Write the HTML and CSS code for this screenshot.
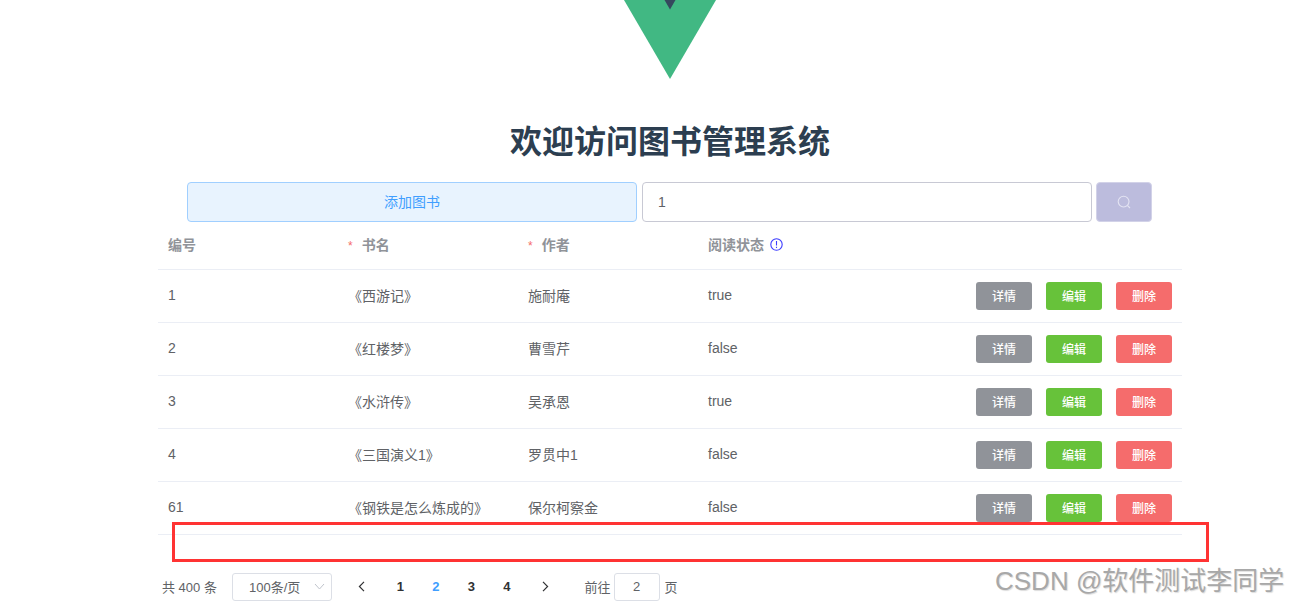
FILE: index.html
```html
<!DOCTYPE html>
<html lang="zh-CN">
<head>
<meta charset="utf-8">
<title>图书管理系统</title>
<link rel="stylesheet" href="styles.css">
</head>
<body>
<div class="app">
  <svg class="logo" width="92" height="79" viewBox="0 0 92 79"><polygon fill="#41b883" points="0,0 92,0 46,79"/><polygon fill="#35495e" points="40.5,0 51.5,0 46,9.5"/></svg>
  <h1 class="title">欢迎访问图书管理系统</h1>
  <div class="toolbar">
    <button class="add">添加图书</button>
    <input class="search-input" value="1">
    <button class="search-btn" aria-label="搜索"><svg width="14" height="14" viewBox="0 0 14 14" fill="none" stroke="#e3e3f2" stroke-width="1.1"><circle cx="6.6" cy="6.6" r="5.4"/><path d="M10.6 10.6L13 13"/></svg></button>
  </div>
  <table class="books">
    <thead>
      <tr>
        <th>编号</th>
        <th><span class="req">*</span>书名</th>
        <th><span class="req">*</span>作者</th>
        <th><span class="status-head">阅读状态<svg width="13" height="13" viewBox="0 0 13 13" fill="none" stroke="#3d3dff" stroke-width="1.1"><circle cx="6.5" cy="6.5" r="5.7"/><path d="M6.5 3V7.6M6.5 8.8v1.3"/></svg></span></th>
        <th></th>
      </tr>
    </thead>
    <tbody>
      <tr><td>1</td><td>《西游记》</td><td>施耐庵</td><td>true</td><td class="ops"><button class="op gray">详情</button><button class="op green">编辑</button><button class="op red">删除</button></td></tr>
      <tr><td>2</td><td>《红楼梦》</td><td>曹雪芹</td><td>false</td><td class="ops"><button class="op gray">详情</button><button class="op green">编辑</button><button class="op red">删除</button></td></tr>
      <tr><td>3</td><td>《水浒传》</td><td>吴承恩</td><td>true</td><td class="ops"><button class="op gray">详情</button><button class="op green">编辑</button><button class="op red">删除</button></td></tr>
      <tr><td>4</td><td>《三国演义1》</td><td>罗贯中1</td><td>false</td><td class="ops"><button class="op gray">详情</button><button class="op green">编辑</button><button class="op red">删除</button></td></tr>
      <tr><td>61</td><td>《钢铁是怎么炼成的》</td><td>保尔柯察金</td><td>false</td><td class="ops"><button class="op gray">详情</button><button class="op green">编辑</button><button class="op red">删除</button></td></tr>
    </tbody>
  </table>
  <div class="pager">
    <span class="total">共 400 条</span>
    <div class="select"><span>100条/页</span><svg width="11" height="7" viewBox="0 0 11 7" fill="none" stroke="#c0c4cc"><path d="M1 1l4.5 5L10 1"/></svg></div>
    <span class="nav prev"><svg width="7" height="11" viewBox="0 0 7 11" fill="none" stroke="#303133" stroke-width="1.2"><path d="M6 .8L1.4 5.5 6 10.2"/></svg></span>
    <span class="num">1</span><span class="num active">2</span><span class="num">3</span><span class="num">4</span>
    <span class="nav next"><svg width="7" height="11" viewBox="0 0 7 11" fill="none" stroke="#303133" stroke-width="1.2"><path d="M1 .8L5.6 5.5 1 10.2"/></svg></span>
    <span class="goto">前往</span>
    <input class="jump" value="2">
    <span class="unit">页</span>
  </div>
</div>
<div class="redbox"></div>
<div class="watermark">CSDN @软件测试李同学</div>
</body>
</html>
```
FILE: styles.css
```css
* { box-sizing: border-box; }
html, body { margin: 0; padding: 0; height: 603px; overflow: hidden; background: #fff; }
body { font-family: "Liberation Sans", "Noto Sans CJK SC", sans-serif; color: #606266; font-size: 14px; position: relative; }
.app { width: 1024px; margin-left: 158px; }
.logo { display: block; margin: 0 auto; }
.title { margin: 43px 0 20px; height: 40px; line-height: 40px; font-size: 32px; font-weight: 700; text-align: center; color: #2c3e50; }
.toolbar { display: flex; margin-left: 29px; height: 40px; }
.add { width: 450px; height: 40px; border: 1px solid #a0cfff; border-radius: 4px; background: #e8f3fe; color: #409eff; font: inherit; padding: 0 0 2px; }
.search-input { width: 450px; height: 40px; margin-left: 5px; border: 1px solid #c8c9d4; border-radius: 4px; padding: 0 15px; font: inherit; color: #606266; outline: none; }
.search-btn { width: 56px; height: 40px; margin-left: 4px; border: 1px solid #d2d2e8; border-radius: 4px; background: #bcbcdd; padding: 0; display: flex; align-items: center; justify-content: center; }
.books { width: 1024px; border-collapse: collapse; table-layout: fixed; }
.books th, .books td { width: 180px; padding: 0 10px; border-bottom: 1px solid #ebeef5; text-align: left; }
.books th:last-child, .books td:last-child { width: 304px; }
.books th { height: 47px; font-weight: 700; color: #909399; font-size: 14px; padding-bottom: 2px; }
.books td { height: 53px; font-size: 14px; padding-bottom: 2px; color: #606266; }
.req { color: #f56c6c; font-weight: 400; font-size: 12px; margin-right: 9px; }
.status-head { display: inline-flex; align-items: center; gap: 6px; }
.books td.ops { text-align: right; padding-bottom: 0; padding-top: 1px; }
.op { width: 56px; height: 28px; margin-left: 14px; padding: 0 0 2px; border: 0; border-radius: 3px; color: #fff; font: inherit; font-size: 12px; font-weight: 500; vertical-align: middle; }
.op.gray { background: #909399; }
.op.green { background: #67c23a; }
.op.red { background: #f56c6c; }
.pager { display: flex; align-items: center; height: 28px; margin-top: 38px; padding-left: 4px; font-size: 13px; }
.total { width: 70px; white-space: pre; }
.select { width: 100px; height: 28px; border: 1px solid #dcdfe6; border-radius: 3px; display: flex; align-items: center; justify-content: space-between; padding: 0 6px 0 16px; }
.nav { width: 36px; display: flex; justify-content: center; }
.prev { margin-left: 11px; }
.next { margin-left: 3px; }
.num { width: 35.5px; text-align: center; font-weight: 700; color: #303133; }
.prev + .num { margin-left: 3.5px; }
.num.active { color: #409eff; }
.goto { margin-left: 21px; }
.jump { width: 46px; height: 28px; margin-left: 3px; border: 1px solid #dcdfe6; border-radius: 3px; text-align: center; font: inherit; color: #606266; padding: 0; outline: none; }
.unit { margin-left: 5px; }
.redbox { position: absolute; left: 172px; top: 522px; width: 1037px; height: 40px; border: 3px solid #ff3333; }
.watermark { position: absolute; left: 995px; top: 565px; font-size: 26px; line-height: 32px; color: #a8a8a8; white-space: nowrap; text-shadow: 1px 1px 1px #ddd; }
```
